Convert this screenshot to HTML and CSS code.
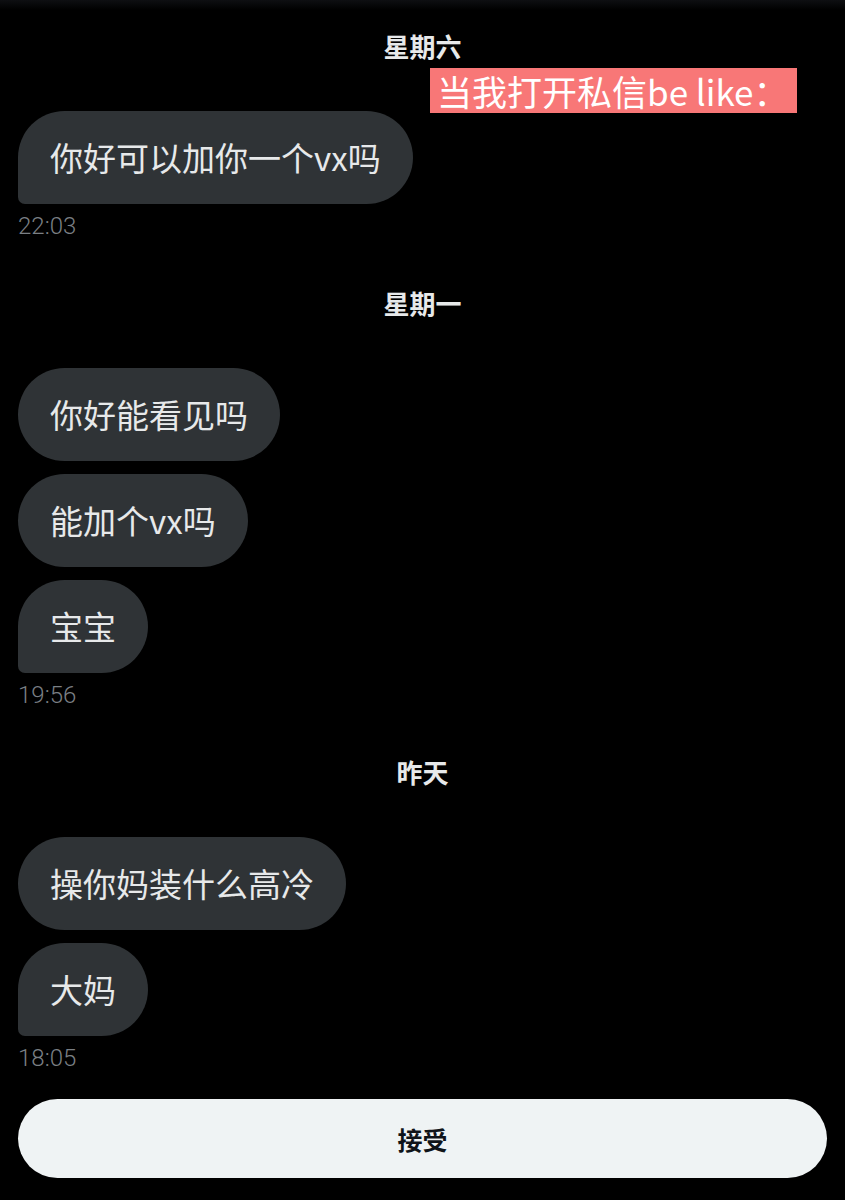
FILE: index.html
```html
<!DOCTYPE html>
<html lang="zh">
<head>
<meta charset="utf-8">
<title>私信</title>
<link rel="stylesheet" href="styles.css">
</head>
<body>
<div class="topbar"></div>
<main class="chat">
  <div class="caption">当我打开私信be like：</div>

  <section class="group first">
    <div class="day">星期六</div>
    <div class="bubbles">
      <div class="bubble last">你好可以加你一个vx吗</div>
    </div>
    <div class="time">22:03</div>
  </section>

  <section class="group">
    <div class="day">星期一</div>
    <div class="bubbles">
      <div class="bubble">你好能看见吗</div>
      <div class="bubble">能加个vx吗</div>
      <div class="bubble last">宝宝</div>
    </div>
    <div class="time">19:56</div>
  </section>

  <section class="group">
    <div class="day">昨天</div>
    <div class="bubbles">
      <div class="bubble">操你妈装什么高冷</div>
      <div class="bubble last">大妈</div>
    </div>
    <div class="time">18:05</div>
  </section>

  <button class="accept">接受</button>
</main>
</body>
</html>
```

FILE: styles.css
```css
* { box-sizing: border-box; }

html, body {
  margin: 0;
  padding: 0;
  background: #000;
}

body {
  width: 845px;
  height: 1200px;
  overflow: hidden;
  font-family: "Noto Sans CJK SC", "Noto Sans", sans-serif;
  color: #e7e9ea;
}

.topbar {
  height: 10px;
  background: linear-gradient(#0e0f12, #000);
}

.chat {
  position: relative;
  padding: 0 18px;
  display: flex;
  flex-direction: column;
}

.caption {
  position: absolute;
  left: 430px;
  top: 58px;
  width: 367px;
  height: 45px;
  line-height: 45px;
  padding-left: 7px;
  background: #f87777;
  color: #fff;
  font-size: 35px;
  font-weight: 400;
  white-space: nowrap;
  z-index: 2;
}

.group {
  display: flex;
  flex-direction: column;
  margin-top: 48px;
}

.group.first {
  margin-top: 21px;
}

.day {
  text-align: center;
  font-size: 26px;
  font-weight: 700;
  line-height: 30px;
  height: 30px;
  color: #e7e9ea;
}

.bubbles {
  display: flex;
  flex-direction: column;
  align-items: flex-start;
  gap: 13px;
  margin-top: 50px;
}

.bubble {
  background: #2f3336;
  color: #e7e9ea;
  font-size: 33px;
  line-height: 45px;
  padding: 24px 32px;
  border-radius: 47px;
  white-space: nowrap;
}

.bubble.last {
  border-bottom-left-radius: 7px;
}

.time {
  margin-top: 8px;
  font-family: Roboto, "Liberation Sans", sans-serif;
  font-size: 24px;
  font-weight: 300;
  line-height: 28px;
  height: 28px;
  color: #7a7f84;
}

.accept {
  margin-top: 27px;
  width: 809px;
  height: 79px;
  border: none;
  border-radius: 40px;
  background: #eff3f4;
  color: #0f1419;
  font-family: "Noto Sans CJK SC", "Noto Sans", sans-serif;
  font-size: 25px;
  font-weight: 700;
  padding: 0;
}
```
